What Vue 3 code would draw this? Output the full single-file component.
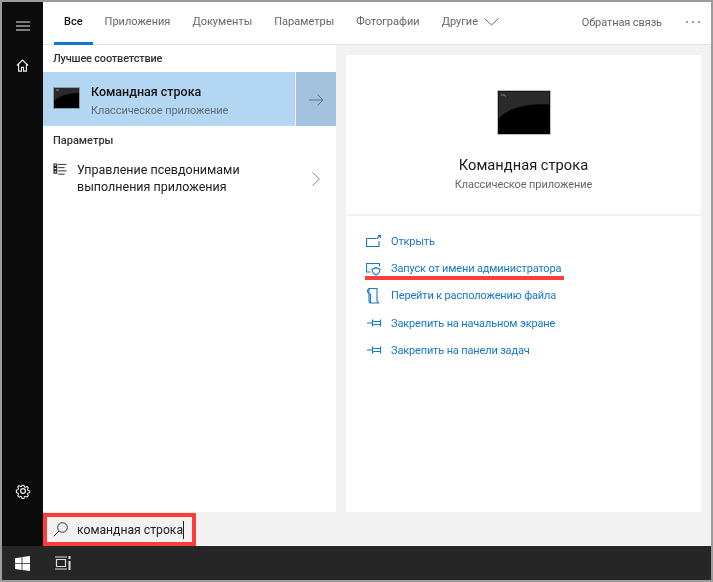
<template>
  <div class="frame">
    <div class="main">
      <aside class="sidebar">
        <button class="side-btn menu">
          <svg width="14" height="10" viewBox="0 0 14 10"><path d="M0 1h14M0 5h14M0 9h14" stroke="#eee" stroke-width="1.2" fill="none" /></svg>
        </button>
        <button class="side-btn home">
          <svg width="13" height="13" viewBox="0 0 14 15" fill="none" stroke="#eee" stroke-width="1.3"><path d="M.5 7.500 7 1.200l6.500 6.300M2.500 6v8h3.300V9.500h2.400V14h3.300V6" /></svg>
        </button>
        <button class="side-btn gear">
          <svg width="16" height="16" viewBox="0 0 16 16" fill="none" stroke="#eee" stroke-width="1.2"><circle cx="8" cy="8" r="2.4" /><path d="M6.800 1h2.400l.4 2 1.300.6 1.800-1.100 1.700 1.700-1.100 1.800.6 1.300 2 .4v2.400l-2 .4-.6 1.300 1.100 1.800-1.700 1.700-1.800-1.100-1.300.6-.4 2H6.800l-.4-2-1.300-.6-1.800 1.100-1.700-1.700 1.100-1.800-.6-1.300-2-.4V6.800l2-.4.6-1.300-1.100-1.800 1.700-1.700 1.800 1.100 1.300-.6z" transform="translate(1.300 1.300) scale(.84)" /></svg>
        </button>
      </aside>

      <div class="content">
        <nav class="tabs">
          <a v-for="t in tabs" :key="t" class="tab" :class="{ active: t === 'Все' }">{{ t }}</a>
          <a class="tab more">
            Другие
            <svg width="15" height="8" viewBox="0 0 15 8" fill="none" stroke="#666" stroke-width="1"><path d="M.5.500 7.500 7l7-6.500" /></svg>
          </a>
          <a class="feedback">Обратная связь</a>
          <span class="dots"><i></i><i></i><i></i></span>
        </nav>

        <div class="body">
          <section class="results">
            <h4 class="group-title first">Лучшее соответствие</h4>
            <div class="best">
              <div class="best-main">
                <svg class="cmd-small" width="27" height="22" viewBox="0 0 27 22">
                  <rect x=".5" y=".5" width="26" height="21" fill="#000" stroke="#8d99a4" />
                  <path d="M1 1h25v5C15 6 6 9 1 14z" fill="#2a2a2a" />
                  <path d="M3 3h3" stroke="#aaa" stroke-width=".8" />
                </svg>
                <div class="best-text">
                  <div class="best-name">Командная строка</div>
                  <div class="best-sub">Классическое приложение</div>
                </div>
              </div>
              <div class="best-arrow">
                <svg width="15" height="12" viewBox="0 0 15 12" fill="none" stroke="#5f6f7c" stroke-width="1"><path d="M0 6h14M8.500.5 14 6l-5.500 5.500" /></svg>
              </div>
            </div>
            <h4 class="group-title">Параметры</h4>
            <div class="setting">
              <svg class="setting-icon" width="14" height="13" viewBox="0 0 14 14" fill="none" stroke="#222"><path d="M5 1.500h9M5 5h7M5 8.500h9M5 12h7" /><path d="M.5 1h3v2.500h-3zM.5 4.700h3v2.500h-3zM.5 8.400h3v2.500h-3z" stroke-width="1.100" /></svg>
              <div class="setting-text">Управление псевдонимами выполнения приложения</div>
              <svg class="setting-chev" width="8" height="14" viewBox="0 0 8 14" fill="none" stroke="#8a8a8a"><path d="m.5.500 7 6.500-7 6.500" /></svg>
            </div>
          </section>

          <section class="detail">
            <div class="card">
              <div class="card-head">
                <svg width="54" height="45" viewBox="0 0 54 45">
                  <rect x=".5" y=".5" width="53" height="44" fill="#000" stroke="#b9c0ca" />
                  <path d="M1.500 1.500h51v13C30 13 10 18 1.500 29z" fill="#2b2b2b" />
                  <path d="M4 5h3l2 1.500" stroke="#999" stroke-width=".8" fill="none" />
                </svg>
                <div class="card-name">Командная строка</div>
                <div class="card-sub">Классическое приложение</div>
              </div>
              <ul class="actions">
                <li v-for="a in actions" :key="a.label" class="action">
                  <svg class="action-icon" width="16" height="16" viewBox="0 0 16 16" fill="none" stroke="#1a79c8" stroke-width="1.100" v-html="a.icon"></svg>
                  <span>{{ a.label }}</span>
                  <i v-if="a.marked" class="red-line"></i>
                </li>
              </ul>
            </div>
          </section>
        </div>

        <div class="search-row">
          <div class="search">
            <svg class="search-icon" width="15" height="15" viewBox="0 0 15 15" fill="none" stroke="#333" stroke-width="1"><circle cx="9.500" cy="5.500" r="4.800" /><path d="M6 9 .7 14.300" /></svg>
            <span class="query">командная строка</span>
          </div>
        </div>
      </div>
    </div>

    <footer class="taskbar">
      <svg class="win" width="15" height="15" viewBox="0 0 15 15" fill="#fff"><path d="M0 2.200 6.600 1.200v6H0zM7.400 1.100 15 0v7.200H7.400zM0 8h6.600v6L0 13zM7.400 8H15v7l-7.600-1.100z" /></svg>
      <svg class="view" width="16" height="14" viewBox="0 0 16 14" fill="none" stroke="#ddd" stroke-width="1.200"><path d="M1.500 3.500h9v7h-9zM0 1h12M0 13h12" /><path d="M14.500 0v3M14.500 5v9" stroke-width="2" /></svg>
    </footer>
  </div>
</template>

<script setup>
const tabs = ['Все', 'Приложения', 'Документы', 'Параметры', 'Фотографии']

const pin = '<path d="M1 8h5.500M6.500 4.500v7M6.500 6l2.500.5h5.500M14.500 4.500v7M6.500 10l2.500-.5h5.500" />'

const actions = [
  { label: 'Открыть', icon: '<path d="M.5 4.500h10M.5 4.500v8h12.500V7M11 4.500l3-3M12 1.500h2.500V4" />' },
  { label: 'Запуск от имени администратора', marked: true, icon: '<path d="M4.500 11H.5V2.500h13V5.500" /><path d="M6 8c2 0 3-.5 4-1.500 1 1 2 1.500 4 1.500 0 3-1.500 5-4 6-2.500-1-4-3-4-6z" />' },
  { label: 'Перейти к расположению файла', icon: '<path d="M3 .5h8v12.500l1.500 2H4L3 13.500zM3 .5c-2 1-2 4 0 5l1.500 1v8.500" />' },
  { label: 'Закрепить на начальном экране', icon: pin },
  { label: 'Закрепить на панели задач', icon: pin }
]
</script>

<style>
html, body { margin: 0; }
</style>

<style scoped>
* { box-sizing: border-box; }

.frame {
  width: 713px;
  height: 582px;
  border: 2px solid #9c9c9c;
  display: flex;
  flex-direction: column;
  font-family: Roboto, "Noto Sans", sans-serif;
  font-size: 11px;
  color: #222;
  overflow: hidden;
}

.main {
  flex: 1;
  display: flex;
  min-height: 0;
  filter: blur(.3px);
}

.sidebar {
  width: 41px;
  background: #0b0b0b;
  display: flex;
  flex-direction: column;
  align-items: center;
}

.side-btn {
  background: none;
  border: none;
  padding: 0;
  display: flex;
  align-items: center;
  justify-content: center;
}
.side-btn.menu { margin-top: 19px; height: 10px; }
.side-btn.home { margin-top: 28px; height: 13px; }
.side-btn.gear { margin-top: auto; margin-bottom: 47px; height: 16px; }

.content {
  flex: 1;
  display: flex;
  flex-direction: column;
  min-width: 0;
  background: #f2f2f2;
}

.tabs {
  height: 43px;
  background: #fff;
  border-bottom: 1px solid #e4e4e4;
  display: flex;
  align-items: stretch;
  gap: 2px;
  padding-left: 11px;
  padding-right: 11px;
}

.tab {
  padding: 0 10px 1px;
  display: flex;
  align-items: center;
  gap: 6px;
  color: #666;
  border-bottom: 3px solid transparent;
  margin-bottom: -1px;
  white-space: nowrap;
}
.tab.active {
  color: #111;
  font-weight: 500;
  border-bottom-color: #0f78d4;
}
.feedback {
  margin-left: auto;
  margin-right: -1px;
  align-self: center;
  color: #666;
  margin-bottom: 2px;
  letter-spacing: -.1px;
}
.dots {
  align-self: center;
  margin-left: 23px;
  margin-bottom: 2px;
  display: flex;
  gap: 4px;
}
.dots i {
  width: 2px;
  height: 2px;
  background: #999;
}

.body {
  flex: 1;
  display: flex;
  min-height: 0;
}

.results {
  width: 293px;
  background: #fff;
}

.group-title {
  margin: 0;
  font-size: 11px;
  font-weight: 500;
  color: #333;
  padding: 0 10px;
  height: 28px;
  display: flex;
  align-items: center;
}
.group-title.first {
  height: 27px;
  letter-spacing: -.2px;
}

.best {
  height: 54px;
  display: flex;
  background: #b3d7f2;
}
.best-main {
  flex: 1;
  display: flex;
  align-items: center;
  gap: 11px;
  padding-left: 10px;
}
.cmd-small { margin-bottom: 3px; }
.best-text { padding-top: 3px; }
.best-name {
  font-size: 12.500px;
  font-weight: 500;
  color: #111;
  line-height: 19px;
}
.best-sub {
  color: #5d6b78;
  line-height: 19px;
  letter-spacing: -.1px;
}
.best-arrow {
  width: 41px;
  border-left: 1px solid #eaf3fa;
  background: #a3c2de;
  display: flex;
  align-items: center;
  justify-content: center;
  padding-top: 2px;
}

.setting {
  display: flex;
  align-items: flex-start;
  padding: 7px 0 0 10px;
}
.setting-icon { margin-top: 2px; flex: none; }
.setting-text {
  width: 190px;
  margin-left: 10px;
  font-size: 12.500px;
  line-height: 17px;
  color: #222;
}
.setting-chev { margin: 11px 0 0 45px; flex: none; }

.detail {
  flex: 1;
  padding: 10px 10px 0;
  display: flex;
  min-width: 0;
}

.card {
  flex: 1;
  background: #fff;
}

.card-head {
  height: 161px;
  border-bottom: 2px solid #f2f2f2;
  display: flex;
  flex-direction: column;
  align-items: center;
  padding-top: 35px;
}
.card-name {
  font-size: 14.700px;
  color: #1a1a1a;
  margin-top: 20px;
  line-height: 20px;
}
.card-sub {
  color: #666;
  margin-top: 1px;
  line-height: 18px;
  letter-spacing: -.1px;
}

.actions {
  list-style: none;
  margin: 0;
  padding: 12px 0 0 20px;
}
.action {
  position: relative;
  height: 27.200px;
  display: flex;
  align-items: center;
  gap: 9px;
  color: #1577c8;
  letter-spacing: -.15px;
}
.action-icon { flex: none; }
.red-line {
  position: absolute;
  left: -1px;
  top: 21px;
  width: 199px;
  height: 4px;
  background: #ff3f3f;
}

.search-row {
  height: 34px;
  display: flex;
  align-items: flex-end;
  border-bottom: 1px solid #fafafa;
}
.search {
  width: 153px;
  height: 33px;
  border: 4px solid #ff3c3c;
  background: #f2f2f2;
  display: flex;
  align-items: center;
  gap: 9px;
  padding-left: 6px;
  margin-bottom: -1px;
}
.search-icon { flex: none; }
.query {
  font-size: 12.200px;
  color: #222;
  border-right: 1px solid #222;
  white-space: nowrap;
  line-height: 18px;
}

.taskbar {
  height: 34px;
  background: #262626;
  display: flex;
  align-items: center;
}
.win { margin-left: 13px; }
.view { margin-left: 25px; }
</style>
